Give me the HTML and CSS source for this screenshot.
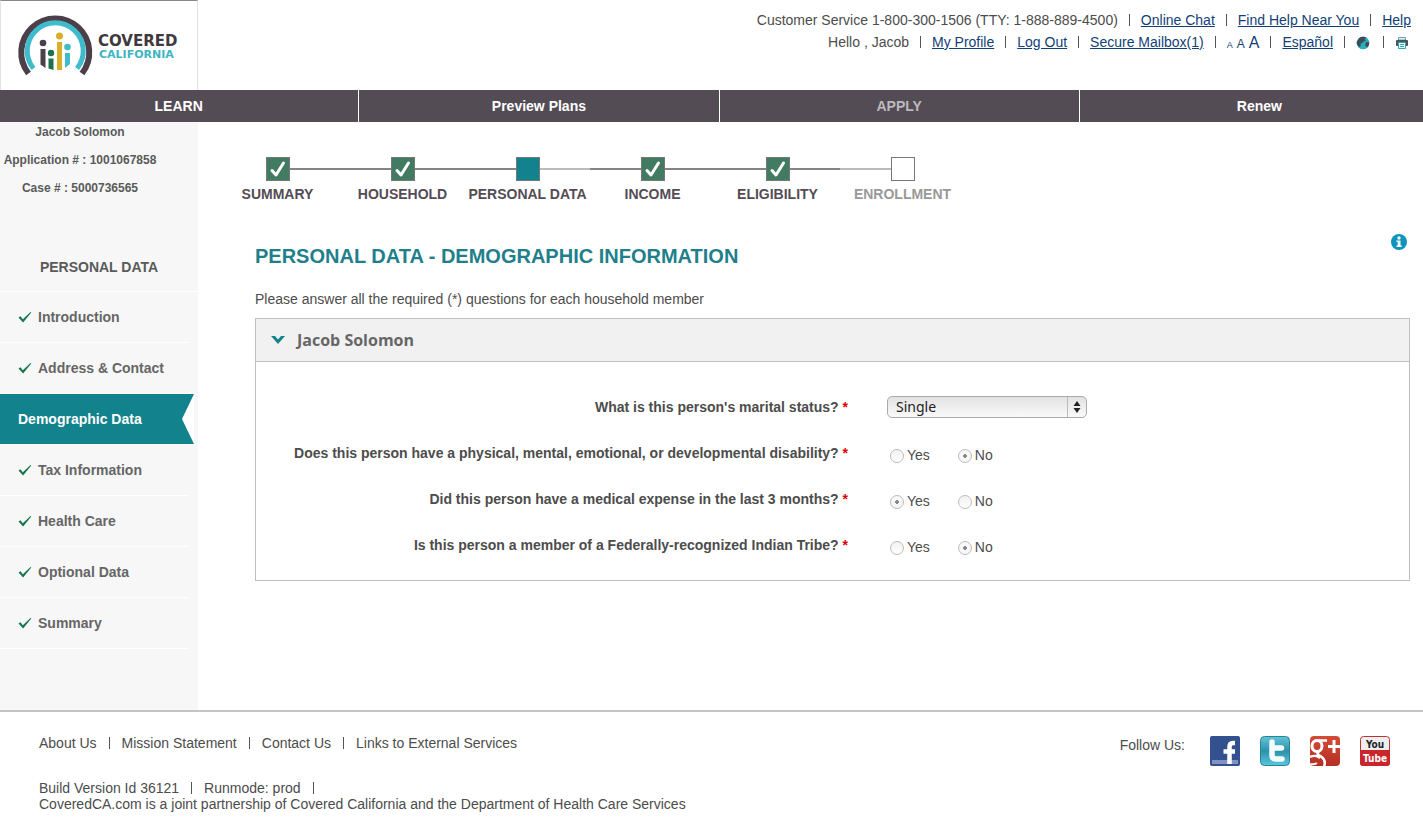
FILE: index.html
```html
<!DOCTYPE html>
<html lang="en">
<head>
<meta charset="utf-8">
<title>Covered California - Demographic Information</title>
<link rel="stylesheet" href="styles.css">
</head>
<body>
<svg class="defs" aria-hidden="true">
  <symbol id="tick" viewBox="0 0 14 12"><path d="M.5 6.500l2-1.200 2.300 3L12.500 1l.8.6-8.200 9.900z" fill="#16764b"/></symbol>
  <symbol id="box-tick" viewBox="0 0 22 22"><path d="M5 12.500l4 4.500L16.500 5" fill="none" stroke="#fff" stroke-width="3" stroke-linecap="round" stroke-linejoin="round"/></symbol>
</svg>
<header class="header">
  <a class="logo" href="#" aria-label="Covered California">
    <svg width="198" height="90" viewBox="1 1 198 90">
      <path d="M28.500 73.500A34 34 0 1 1 82 73.500" fill="none" stroke="#4b3f4a" stroke-width="6"/>
      <path d="M33.500 68.500A28 28 0 1 1 77 68.500" fill="none" stroke="#3fbccb" stroke-width="5"/>
      <g fill="#4b3f4a"><circle cx="43" cy="43" r="3.300"/><path d="M40.500 49h5v19l-5-3.500z"/></g>
      <g fill="#1f704e"><circle cx="51" cy="53" r="3.200"/><path d="M48.500 58.500h5V70l-5-1.500z"/></g>
      <g fill="#d9ae28"><circle cx="59.500" cy="36" r="3.500"/><path d="M57 42h5v28h-5z"/></g>
      <g fill="#3fbccb"><circle cx="67.500" cy="47" r="3.300"/><path d="M65 53h5v11l-5 4z"/></g>
      <text class="logo-top" x="98" y="46">COVERED</text>
      <text class="logo-bottom" x="99" y="58">CALIFORNIA</text>
    </svg>
  </a>
  <div class="utility">
    <div class="utility-row">
      <span>Customer Service 1-800-300-1506 (TTY: 1-888-889-4500)</span><i class="bar"></i>
      <a href="#">Online Chat</a><i class="bar"></i>
      <a href="#">Find Help Near You</a><i class="bar"></i>
      <a href="#">Help</a>
    </div>
    <div class="utility-row">
      <span>Hello , Jacob</span><i class="bar"></i>
      <a href="#">My Profile</a><i class="bar"></i>
      <a href="#">Log Out</a><i class="bar"></i>
      <a href="#">Secure Mailbox(1)</a><i class="bar"></i>
      <span class="sizes"><button class="size-s" aria-label="Small text">A</button><button class="size-m" aria-label="Medium text">A</button><button class="size-l" aria-label="Large text">A</button></span><i class="bar"></i>
      <a href="#">Español</a><i class="bar"></i>
      <a class="icon-link" href="#" aria-label="Language"><svg width="14" height="14" viewBox="0 0 14 14"><circle cx="7" cy="7" r="6.300" fill="#26b0ba"/><path d="M3 2.200C5 .5 9 .3 10.500 1.700L8.500 3 10 4.500 7.500 5.500 6.500 7l-2 .5.500 2L3.500 11C1.500 9.500.7 8 .7 6.500z" fill="#3f4a58"/><path d="M10 6l3.200.5c0 2-.7 4-2.200 5L9 9z" fill="#3f4a58"/></svg></a><i class="bar"></i>
      <a class="icon-link" href="#" aria-label="Print"><svg width="14" height="14" viewBox="0 0 14 14"><path d="M3.500 1.500h7V4h-7z" fill="#dff3f3" stroke="#6ba3a8"/><rect x="1" y="4" width="12" height="6" rx="1" fill="#4c535c"/><path d="M3.500 6.500h7v6h-7z" fill="#e9ffff" stroke="#2aa9ae"/><path d="M5 8.500h4M5 10.500h4" stroke="#2aa9ae"/></svg></a>
    </div>
  </div>
</header>
<nav class="nav">
  <a href="#">LEARN</a><a href="#">Preview Plans</a><a class="muted" href="#">APPLY</a><a href="#">Renew</a>
</nav>
<div class="body">
  <aside class="sidebar">
    <div class="case">
      <p>Jacob Solomon</p><p>Application # : 1001067858</p><p>Case # : 5000736565</p>
    </div>
    <h2>PERSONAL DATA</h2>
    <ul class="menu">
      <li><a href="#"><svg class="tick"><use href="#tick"/></svg>Introduction</a></li>
      <li><a href="#"><svg class="tick"><use href="#tick"/></svg>Address &amp; Contact</a></li>
      <li class="active"><a href="#">Demographic Data</a><svg class="notch" viewBox="0 0 12 50" preserveAspectRatio="none"><path d="M12 0L0 25 12 50z" fill="#fff"/></svg></li>
      <li><a href="#"><svg class="tick"><use href="#tick"/></svg>Tax Information</a></li>
      <li><a href="#"><svg class="tick"><use href="#tick"/></svg>Health Care</a></li>
      <li><a href="#"><svg class="tick"><use href="#tick"/></svg>Optional Data</a></li>
      <li><a href="#"><svg class="tick"><use href="#tick"/></svg>Summary</a></li>
    </ul>
  </aside>
  <main class="main">
    <ol class="steps">
      <li><div class="track"><i class="line none"></i><span class="box done"><svg><use href="#box-tick"/></svg></span><i class="line"></i></div>SUMMARY</li>
      <li><div class="track"><i class="line"></i><span class="box done"><svg><use href="#box-tick"/></svg></span><i class="line"></i></div>HOUSEHOLD</li>
      <li><div class="track"><i class="line"></i><span class="box current"></span><i class="line light"></i></div>PERSONAL DATA</li>
      <li><div class="track"><i class="line"></i><span class="box done"><svg><use href="#box-tick"/></svg></span><i class="line"></i></div>INCOME</li>
      <li><div class="track"><i class="line"></i><span class="box done"><svg><use href="#box-tick"/></svg></span><i class="line"></i></div>ELIGIBILITY</li>
      <li class="pending"><div class="track"><i class="line light"></i><span class="box"></span><i class="line none"></i></div>ENROLLMENT</li>
    </ol>
    <div class="title">
      <h1>PERSONAL DATA - DEMOGRAPHIC INFORMATION</h1>
      <button class="info" aria-label="Information"><svg width="16" height="16" viewBox="0 0 16 16"><circle cx="8" cy="8" r="8" fill="#0d94bd"/><circle cx="8" cy="4" r="1.700" fill="#fff"/><path d="M5.500 6.500h4v5h1.200v1.500H5.500v-1.500h1.200V8H5.500z" fill="#fff"/></svg></button>
    </div>
    <p class="intro">Please answer all the required (*) questions for each household member</p>
    <section class="panel">
      <h3><svg width="14" height="8" viewBox="0 0 14 8"><path d="M0 0h4l3 3.500L10 0h4L7 8z" fill="#12828c"/></svg>Jacob Solomon</h3>
      <form class="form">
        <div class="row">
          <label class="question" for="marital">What is this person's marital status? <em>*</em></label>
          <span class="select"><select id="marital"><option>Single</option></select><svg width="8" height="12" viewBox="0 0 8 12"><path d="M4 0l3.500 5h-7zM4 12L.5 7h7z" fill="#222"/></svg></span>
        </div>
        <div class="row" role="radiogroup" aria-labelledby="q1">
          <span class="question" id="q1">Does this person have a physical, mental, emotional, or developmental disability? <em>*</em></span>
          <span class="answers"><label><input type="radio" name="a" disabled>Yes</label><label><input type="radio" name="a" checked disabled>No</label></span>
        </div>
        <div class="row" role="radiogroup" aria-labelledby="q2">
          <span class="question" id="q2">Did this person have a medical expense in the last 3 months? <em>*</em></span>
          <span class="answers"><label><input type="radio" name="b" checked disabled>Yes</label><label><input type="radio" name="b" disabled>No</label></span>
        </div>
        <div class="row" role="radiogroup" aria-labelledby="q3">
          <span class="question" id="q3">Is this person a member of a Federally-recognized Indian Tribe? <em>*</em></span>
          <span class="answers"><label><input type="radio" name="c" disabled>Yes</label><label><input type="radio" name="c" checked disabled>No</label></span>
        </div>
      </form>
    </section>
  </main>
</div>
<footer class="footer">
  <div>
    <div class="links"><a href="#">About Us</a><i class="bar"></i><a href="#">Mission Statement</a><i class="bar"></i><a href="#">Contact Us</a><i class="bar"></i><a href="#">Links to External Services</a></div>
    <div class="build"><span>Build Version Id 36121</span><i class="bar"></i><span>Runmode: prod</span><i class="bar"></i></div>
    <p>CoveredCA.com is a joint partnership of Covered California and the Department of Health Care Services</p>
  </div>
  <div class="social">
    <span>Follow Us:</span>
    <a href="#" aria-label="Facebook"><svg width="30" height="30" viewBox="0 0 30 30"><rect width="30" height="30" rx="2" fill="#34518f"/><path d="M2 24h26v4H2z" fill="#8193c2"/><path d="M25 7h-2q-3.500 0-3.500 4v17M13.500 15.500H25" fill="none" stroke="#fff" stroke-width="4.500"/></svg></a>
    <a href="#" aria-label="Twitter"><svg width="30" height="30" viewBox="0 0 30 30"><defs><linearGradient id="tw" x2="0" y2="1"><stop offset="0" stop-color="#62c5d9"/><stop offset=".5" stop-color="#2d91ab"/><stop offset="1" stop-color="#56c8df"/></linearGradient></defs><rect x=".5" y=".5" width="29" height="29" rx="4" fill="url(#tw)" stroke="#2a8299"/><path d="M12 6v13q0 4 4 4h6M12 12h9.500" fill="none" stroke="#f4fbfd" stroke-width="5.500" stroke-linecap="round"/></svg></a>
    <a href="#" aria-label="Google Plus"><svg width="30" height="30" viewBox="0 0 30 30"><defs><linearGradient id="gp" x2="0" y2="1"><stop offset="0" stop-color="#d54b38"/><stop offset="1" stop-color="#b33024"/></linearGradient><clipPath id="gpc"><rect width="30" height="30" rx="4"/></clipPath></defs><rect width="30" height="30" rx="4" fill="url(#gp)"/><g clip-path="url(#gpc)" fill="none" stroke="#fff"><ellipse cx="7" cy="10" rx="5" ry="5.500" stroke-width="3"/><path d="M8 4.500h9M9 15.500c-3 2-1 3 2 5s5 5 3 10M0 21c4-2 8-1 10 1" stroke-width="2.500"/><path d="M0 28q4 1 7-1" stroke-width="2"/><path d="M24 4v13M18 10.500h12" stroke-width="3"/></g></svg></a>
    <a href="#" aria-label="YouTube"><svg width="30" height="30" viewBox="0 0 30 30"><rect x=".5" y=".5" width="29" height="29" rx="3" fill="#eee" stroke="#b33"/><path d="M0 14h30v13q0 3-3 3H3q-3 0-3-3z" fill="#c8262c"/><text class="yt" x="15" y="12" fill="#222">You</text><text class="yt" x="15" y="26" fill="#fff">Tube</text></svg></a>
  </div>
</footer>
</body>
</html>
```
FILE: styles.css
```css
* { box-sizing: border-box; }
body { margin: 0; background: #fff; color: #4c4c4c; font: 14px/16px "Liberation Sans", Arial, sans-serif; }
h1, h2, h3, p, ul, ol { margin: 0; padding: 0; }
ul, ol { list-style: none; }
button { margin: 0; padding: 0; border: 0; background: none; font-family: inherit; }
svg { display: block; flex: none; }
.defs { position: absolute; width: 0; height: 0; }

.header { display: flex; justify-content: space-between; min-height: 90px; }
.logo { border: 1px solid #e2e2e2; border-top-color: #888; border-bottom: 0; width: 198px; height: 90px; overflow: hidden; }
.logo-top { font: bold 15px "DejaVu Sans", sans-serif; fill: #40383f; }
.logo-bottom { font: bold 11px "DejaVu Sans", sans-serif; fill: #3fb5c3; }
.utility { padding: 9px 12px 0 0; }
.utility-row { display: flex; justify-content: flex-end; align-items: center; height: 22px; gap: 11px; }
.utility-row a { color: #123f78; text-decoration: underline; }
.bar { width: 1px; height: 12px; background: #555; }
.sizes { display: flex; align-items: baseline; gap: 4px; height: 14px; }
.sizes button { color: #123f78; line-height: 16px; }
.size-s { font-size: 9px; }
.size-m { font-size: 12px; }
.size-l { font-size: 16px; }
.icon-link { padding: 2px 2px 0 0; }

.nav { display: grid; grid-template-columns: repeat(4, 25.3%); margin-left: -1px; overflow: hidden; background: #544c55; }
.nav a { height: 32px; border-right: 1px solid #fff; color: #fff; font-weight: bold; line-height: 32px; text-align: center; text-decoration: none; }
.nav .muted { color: #bdb9be; }

.body { display: flex; min-height: 588px; }
.sidebar { flex: 0 0 198px; background: #f7f7f7; color: #5a5a5a; font-weight: bold; }
.case { width: 160px; padding-bottom: 40px; font-size: 12px; line-height: 28px; text-align: center; margin-top: -4px; }
.sidebar h2 { padding-top: 1px; height: 50px; border-bottom: 1px solid #fff; font-size: 14px; line-height: 48px; text-align: center; }
.menu { width: 189px; }
.menu li { height: 51px; border-bottom: 1px solid #fff; }
.menu a { display: flex; align-items: center; gap: 6px; height: 50px; padding-left: 18px; color: #666; text-decoration: none; }
.tick { width: 14px; height: 12px; }
.menu .active { display: flex; justify-content: space-between; width: 194px; height: 50px; margin-bottom: 1px; border: 0; background: #12828c; }
.menu .active a { color: #fff; }
.notch { width: 12px; height: 50px; }

.main { flex: 1; min-width: 0; padding: 35px 13px 0 57px; }
.steps { display: flex; margin-left: -40px; }
.steps li { width: 125px; color: #544c55; font-weight: bold; text-align: center; white-space: nowrap; }
.steps .pending { color: #999; }
.track { display: flex; align-items: center; margin-bottom: 5px; }
.line { flex: 1; height: 2px; background: #858585; }
.light { background: #bbb; }
.none { background: none; }
.box { width: 24px; height: 24px; border: 1px solid #777; }
.box svg { width: 22px; height: 22px; }
.done { background: #407b62; }
.current { background: #12828c; }
.title { display: flex; justify-content: space-between; margin-top: 32px; }
.title h1 { padding-top: 10px; color: #217f8c; font-size: 20px; line-height: 24px; }
.info { width: 16px; height: 16px; margin-right: 3px; }
.intro { margin: 23px 0 11px; }
.panel { border: 1px solid #bfbfbf; }
.panel h3 { display: flex; align-items: center; gap: 12px; height: 43px; padding-left: 15px; border-bottom: 1px solid #bfbfbf; background: #f1f1f1; color: #666; font: bold 16px "Open Sans", sans-serif; }
.form { padding: 22px 0 12px; }
.row { display: grid; grid-template-columns: 596px 1fr; column-gap: 35px; align-items: center; height: 46px; }
.question { justify-self: end; font-weight: bold; padding-right: 4px; white-space: nowrap; }
.question em { color: #d00; font-style: normal; }
.select { display: flex; align-items: center; width: 200px; }
.select select { appearance: none; width: 200px; height: 22px; padding: 0 8px; border: 1px solid #aaa; border-radius: 5px; background: linear-gradient(#e2e2e2, #fafafa); color: #222; font: 14px/18px "Noto Sans", sans-serif; }
.select svg { box-sizing: content-box; margin-left: -20px; padding: 4px 5px; border-left: 1px solid #bbb; pointer-events: none; }
.answers { display: flex; gap: 28px; padding: 4px 0 0 3px; }
.answers label { display: flex; align-items: center; gap: 3px; }
.answers input { appearance: none; width: 14px; height: 14px; margin: 1px 0 0; border: 1px solid #bbb; border-radius: 50%; background: linear-gradient(#f1f1f1, #fff); }
.answers input:checked { background: radial-gradient(circle, #888 0 2px, #f7f7f7 2px); }

.footer { display: flex; justify-content: space-between; border-top: 2px solid #c4c4c4; padding: 23px 33px 24px 39px; }
.footer a { color: inherit; text-decoration: none; }
.links, .build { display: flex; align-items: center; gap: 12px; }
.build { margin-top: 29px; }
.social { display: flex; align-items: flex-start; gap: 20px; padding-top: 1px; }
.social span { margin: 1px 5px 0 0; }
.yt { font: bold 10px "DejaVu Sans Condensed", "DejaVu Sans", sans-serif; text-anchor: middle; }
```
